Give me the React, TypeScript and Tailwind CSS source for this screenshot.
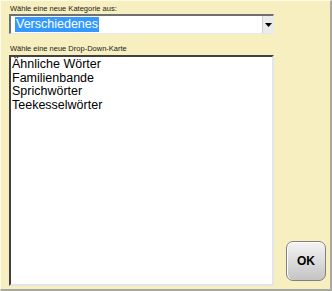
import React from 'react';

const items = ['Ähnliche Wörter', 'Familienbande', 'Sprichwörter', 'Teekesselwörter'];

export default function App() {
    return (
        <div className="w-[332px] h-[291px] bg-[#f7efbf] border-t border-l border-t-[#fffbe6] border-l-[#fffbe6] border-r-2 border-b-2 border-r-[#a8a8a0] border-b-[#a8a8a0] flex font-['Liberation_Sans',Arial,sans-serif]">
            <div className="flex flex-col pl-2 pt-[4px] w-[273px] shrink-0">
                {/* Category select */}
                <div className="text-[7.5px] leading-[8px] text-[#202020] pl-[1px]">Wähle eine neue Kategorie aus:</div>
                <div className="mt-[1px] h-[20px] w-[265px] flex bg-white border-t-2 border-l-2 border-t-[#707070] border-l-[#707070] border-b border-r border-b-[#e8e8e8] border-r-[#e8e8e8]">
                    <div className="flex-1 flex items-center pl-[4px]">
                        <span className="bg-[#3399ff] text-white text-[12.5px] leading-[15px] px-[1px]">Verschiedenes</span>
                    </div>
                    <div className="w-[11px] bg-[#ececec] border-l border-[#d0d0d0] flex items-center justify-center">
                        <svg width="7" height="4" viewBox="0 0 7 4"><polygon points="0,0 7,0 3.5,4" fill="#000" /></svg>
                    </div>
                </div>

                {/* Card list */}
                <div className="mt-[11px] text-[7.5px] leading-[8px] text-[#202020] pl-[1px]">Wähle eine neue Drop-Down-Karte</div>
                <div className="mt-[2px] mb-[3px] flex-1 w-[265px] bg-white border-t-2 border-l-2 border-t-[#404040] border-l-[#404040] border-b-2 border-r-2 border-b-[#e4e4ec] border-r-[#e4e4ec] pt-[1px] pl-[1px]">
                    {items.map(item => (
                        <div key={item} className="text-[12.5px] leading-[13.6px] text-black">{item}</div>
                    ))}
                </div>
            </div>

            <div className="flex-1 flex items-end pl-[12px] pb-[8px]">
                <button className="w-[40px] h-[40px] rounded-[7px] border border-[#808080] bg-gradient-to-b from-[#f4f4f4] via-[#dcdcdc] to-[#c4c4c4] shadow-[inset_0_1px_0_#ffffff,inset_1px_0_0_#ffffff] flex items-center justify-center">
                    <span className="text-[12px] font-bold text-black">OK</span>
                </button>
            </div>
        </div>
    );
}
